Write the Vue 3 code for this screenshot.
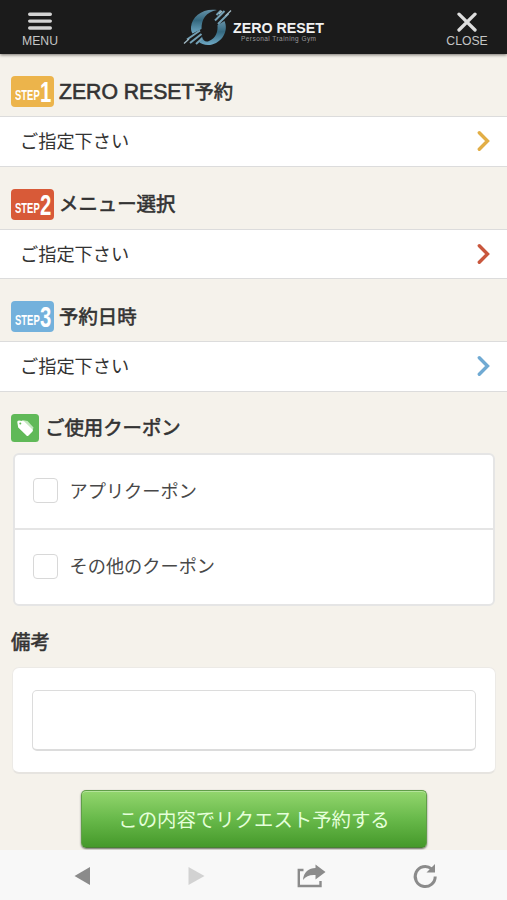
<script setup>
const steps = [
  { n: 1, latin: 'ZERO RESET', title: '予約', color: '#ecb44b', arrow: '#e2ae46' },
  { n: 2, latin: '', title: 'メニュー選択', color: '#d85a38', arrow: '#c9573d' },
  { n: 3, latin: '', title: '予約日時', color: '#73b1dc', arrow: '#70aad3' }
]
const coupons = ['アプリクーポン', 'その他のクーポン']
</script>

<template>
  <div class="screen">
    <header class="bar">
      <button class="nav menu">
        <svg width="24" height="20" viewBox="0 0 24 20"><path d="M1.7 3.2H22.3M1.7 10.1H22.3M1.7 17H22.3" stroke="#d4d4d4" stroke-width="3.4" stroke-linecap="round" /></svg>
        <span>MENU</span>
      </button>
      <svg class="logo" width="146" height="40" viewBox="0 0 146 40">
        <defs>
          <linearGradient id="ring" x1="0" y1="0" x2="0" y2="1">
            <stop offset="0" stop-color="#6592a8" /><stop offset=".45" stop-color="#34687f" /><stop offset="1" stop-color="#6fa9c5" />
          </linearGradient>
        </defs>
        <path d="M34 3C20 1 9 9 8 20C7.800 23 8.500 25 9.500 26.500L18.500 22C18.500 12 23 5 34 3Z" fill="url(#ring)" />
        <path d="M41.500 14C46 24 39 36 27 38C22 38.500 18 37 15.500 34.500L19 29.500C20 34 23 35.500 26 34C33 31 35 25 34.500 18Z" fill="url(#ring)" />
        <path d="M33.500 8L38 3.500M32 13.500L41.500 4M35 17L45.500 6.500M4 32.500L17 23.500M7 36L18.500 27M13 37L19 31.500" stroke="#73a0b5" stroke-width="2" />
        <path d="M42.500 9L48 3.500M39 4L36 7M1 36.500L6 32" stroke="#a0b6c0" stroke-width="1.400" />
        <text x="50" y="26.200" class="brand" textLength="91" lengthAdjust="spacingAndGlyphs">ZERO RESET</text>
        <text x="58" y="34.200" class="tagline" textLength="75" lengthAdjust="spacing">Personal Training Gym</text>
      </svg>
      <button class="nav close">
        <svg width="24" height="20" viewBox="0 0 24 20"><path d="M4 2.200L20 18M20 2.200L4 18" stroke="#dedede" stroke-width="3.300" stroke-linecap="round" /></svg>
        <span>CLOSE</span>
      </button>
    </header>

    <main>
      <section v-for="s in steps" :key="s.n" class="step">
        <h2>
          <span class="badge" :style="{ background: s.color }">
            <span class="step-word">STEP</span><span class="step-number">{{ s.n }}</span>
          </span>
          <span class="heading"><span v-if="s.latin" class="latin">{{ s.latin }}</span>{{ s.title }}</span>
        </h2>
        <button class="choice">
          <span>ご指定下さい</span>
          <svg width="14" height="22" viewBox="0 0 14 22"><path d="M2.300 2.700L10.500 11L2.300 19.300" fill="none" :stroke="s.arrow" stroke-width="3.400" stroke-linecap="round" /></svg>
        </button>
      </section>

      <section class="coupon">
        <h2>
          <svg width="28" height="28" viewBox="0 0 28 28">
            <rect width="28" height="28" rx="3.500" fill="#60b958" />
            <path d="M11 6L16.500 7L22.500 13.500L21.500 16.500L16 22Z" fill="#c4e7c0" />
            <path d="M6.300 8.200Q6 6.500 8 6.500L13 7.200L21.500 15.500Q22.300 16.500 21.500 17.500L17.300 21.700Q16.500 22.400 15.500 21.500L7.200 13.500Z" fill="#fff" />
            <circle cx="9.300" cy="9.500" r="1" fill="#60b958" />
          </svg>
          <span class="heading">ご使用クーポン</span>
        </h2>
        <div class="options">
          <label v-for="c in coupons" :key="c"><i class="box"></i><span>{{ c }}</span></label>
        </div>
      </section>

      <section class="notes">
        <h2><span class="heading">備考</span></h2>
        <div class="note-card"><textarea></textarea></div>
      </section>
      <button class="submit"><span>この内容でリクエスト予約する</span></button>
    </main>

    <footer>
      <svg width="30" height="30" viewBox="0 0 30 30"><path d="M23 6V24L7.500 15Z" fill="#8b8b8b" /></svg>
      <svg width="30" height="30" viewBox="0 0 30 30"><path d="M7.500 6V24L23.500 15Z" fill="#d2d2d2" /></svg>
      <svg width="30" height="30" viewBox="0 0 30 30">
        <path d="M7.500 9H2.800V25H24.500V20" fill="none" stroke="#8b8b8b" stroke-width="2.400" />
        <path d="M7 19C7.500 11 13 7 19.500 7V3.500L29.500 11L19.500 18.500V14C14 13.500 10 15 7 19Z" fill="#8b8b8b" />
      </svg>
      <svg width="30" height="30" viewBox="0 0 30 30">
        <path d="M21.500 7.800A10 10 0 1 0 25.200 15.500" fill="none" stroke="#8b8b8b" stroke-width="3" />
        <path d="M25 3V11.500H16.500Z" fill="#8b8b8b" />
      </svg>
    </footer>
  </div>
</template>

<style>
body { margin: 0; }
</style>

<style scoped>
.screen {
  width: 507px;
  height: 900px;
  display: flex;
  flex-direction: column;
  overflow: hidden;
  background: #f5f2eb;
  color: #333;
  font-family: "Liberation Sans", "Noto Sans CJK JP", sans-serif;
}
* { box-sizing: border-box; }
button { font: inherit; color: inherit; border: 0; padding: 0; background: none; }
svg { display: block; flex: none; }
.bar {
  height: 54px;
  flex: none;
  display: flex;
  justify-content: space-between;
  background: #1b1b1b;
  box-shadow: 0 1px 3px #77736e;
}
.nav {
  width: 80px;
  padding-top: 11px;
  display: flex;
  flex-direction: column;
  align-items: center;
  font-size: 12.200px;
  line-height: 14px;
  color: #c5c5c5;
}
.nav span { margin-top: 3px; }
.close svg { margin-top: 1px; }
.close span { margin-top: 2px; }
.logo { margin: 7px 0 0 5px; }
.brand { font: bold 15px "Liberation Sans", sans-serif; fill: #f1f1f1; }
.tagline { font: 6.500px "Liberation Sans", sans-serif; fill: #9a9a9a; }
main { flex: 1; display: flex; flex-direction: column; min-height: 0; }
h2 { margin: 0; padding-left: 11px; display: flex; align-items: center; font-weight: normal; }
.heading {
  font: 400 19.400px/28px "Noto Sans CJK JP", sans-serif;
  -webkit-text-stroke: .6px #333;
  white-space: nowrap;
  margin-top: -2px;
}
.latin { font: 21.200px "Liberation Sans", sans-serif; -webkit-text-stroke: .6px #333; }
.step { height: 112.500px; flex: none; }
.step h2 { height: 62px; padding-top: 13px; gap: 5px; }
.badge {
  width: 43px;
  height: 31px;
  flex: none;
  display: flex;
  padding-left: 4px;
  border-radius: 4px;
  color: #fff;
  font-family: "Liberation Sans", sans-serif;
  font-weight: bold;
}
.step-word {
  width: 25px;
  padding-top: 11px;
  font-size: 15.500px;
  line-height: 16px;
  transform: scaleX(.61);
  transform-origin: left;
}
.step-number {
  width: 11px;
  font-size: 29px;
  line-height: 32px;
  transform: scaleX(.7);
  transform-origin: left;
}
.choice {
  width: 100%;
  height: 50.500px;
  padding: 0 16px 0 20px;
  display: flex;
  align-items: center;
  justify-content: space-between;
  background: #fff;
  border-top: 1px solid #dcdcdc;
  border-bottom: 1px solid #dcdcdc;
  font: 18.200px/26px "Noto Sans CJK JP", sans-serif;
}
.choice span { margin-top: -2px; }
.coupon { flex: none; }
.coupon h2 { height: 61.500px; padding-top: 12px; gap: 6px; }
.options { margin: 0 12px 0 13px; height: 153px; border: 2px solid #e5e5e5; border-radius: 6px; background: #fff; }
.options label {
  height: 73px;
  padding-left: 17.500px;
  display: flex;
  align-items: center;
  gap: 12px;
  font: 18.200px/26px "Noto Sans CJK JP", sans-serif;
  color: #484848;
}
.options label span { margin-top: -4px; }
.options label + label { height: 76px; border-top: 2px solid #e5e5e5; }
.box { width: 25px; height: 25px; margin-top: -2px; border: 1.500px solid #d8d8d8; border-radius: 4px; background: #fff; }
.notes h2 { height: 61px; padding-top: 11px; }
.note-card {
  height: 107px;
  margin: 0 11px 0 12px;
  padding: 22px 19px;
  border: 1px solid #eceae6;
  border-bottom: 2px solid #e6e4e0;
  border-radius: 7px;
  background: #fff;
}
textarea { display: block; width: 100%; height: 61px; border: 1px solid #dcdcdc; border-bottom-width: 2px; border-radius: 5px; resize: none; outline: 0; background: #fff; }
.submit {
  width: 346px;
  height: 58px;
  margin: 16px 0 0 81px;
  border: 1px solid #609e48;
  border-bottom-color: #488032;
  border-radius: 5px;
  background: linear-gradient(#93d66e, #68b94a 50%, #45992a);
  box-shadow: 0 1px 2px #696c62, inset 0 1px #b4e49a;
  font: 19.400px/28px "Noto Sans CJK JP", sans-serif;
  color: #e5ffda;
}
footer {
  height: 50px;
  flex: none;
  padding: 1px 67px 0;
  display: flex;
  align-items: center;
  justify-content: space-between;
  background: #f8f8f8;
}
</style>
